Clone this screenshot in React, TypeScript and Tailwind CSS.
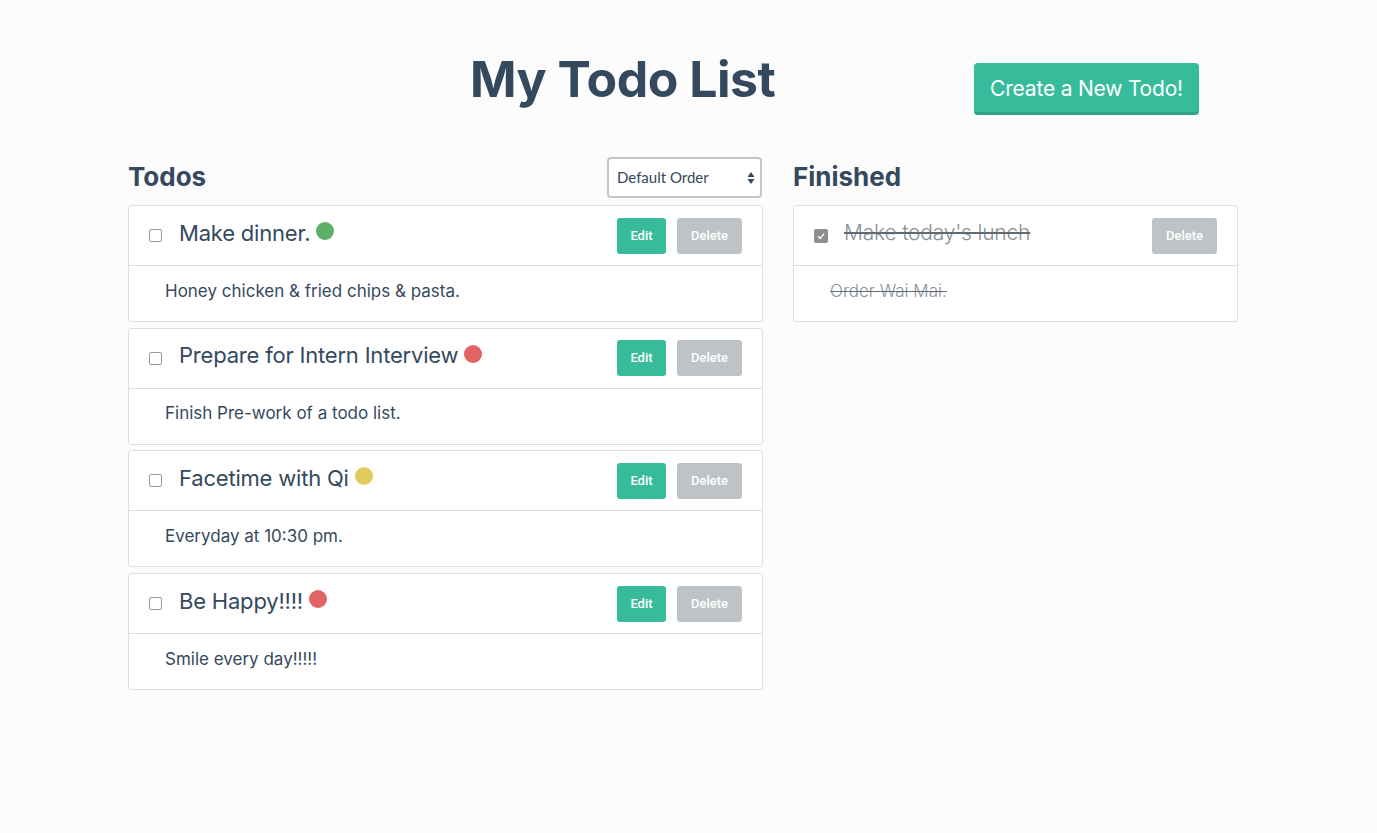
import React from "react";

type Todo = { title: string; desc: string; color: string };

const todos: Todo[] = [
  { title: "Make dinner.", desc: "Honey chicken & fried chips & pasta.", color: "bg-[#5cae68]" },
  { title: "Prepare for Intern Interview", desc: "Finish Pre-work of a todo list.", color: "bg-[#e06464]" },
  { title: "Facetime with Qi", desc: "Everyday at 10:30 pm.", color: "bg-[#dfcc5c]" },
  { title: "Be Happy!!!!", desc: "Smile every day!!!!!", color: "bg-[#e06464]" },
];

function TodoCard({ t }: { t: Todo }) {
  return (
    <div className="border border-[#dcdfe2] rounded-[3px] bg-white">
      <div className="h-[60px] flex items-center pl-[20px] pr-[20px] border-b border-[#dcdfe2]">
        <span className="w-[13px] h-[13px] rounded-[2px] border border-[#9a9a9a] bg-white shrink-0" />
        <span className="ml-[17px] text-[22px] leading-none text-[#34495e] -mt-[6px] font-['Inter',sans-serif] tracking-[-0.2px]">
          {t.title}
        </span>
        <span className={`ml-[6px] -mt-[9px] w-[18px] h-[18px] rounded-full ${t.color} shrink-0`} />
        <div className="ml-auto flex gap-[11px]">
          <button className="w-[49px] h-[36px] rounded-[3px] bg-[#37bc9b] text-white text-[13px] font-medium font-['Roboto',sans-serif]">
            Edit
          </button>
          <button className="w-[65px] h-[36px] rounded-[3px] bg-[#bdc3c7] text-white text-[13px] font-medium font-['Roboto',sans-serif]">
            Delete
          </button>
        </div>
      </div>
      <div className="h-[55px] flex items-center pl-[36px] text-[17px] text-[#34495e] font-['Inter',sans-serif]">
        <span className="-mt-[4px]">{t.desc}</span>
      </div>
    </div>
  );
}

export default function App() {
  return (
    <div className="min-h-[833px] bg-[#fcfcfc] text-[#34495e] font-['Inter',sans-serif]">
      <div className="ml-[128px] w-[1110px]">
        <header className="flex items-start pt-[50px]">
          <h1 className="ml-[342px] text-[50px] leading-[58px] font-bold text-[#34495e] tracking-[-0.5px]">
            My Todo List
          </h1>
          <button className="ml-auto mr-[39px] mt-[13px] w-[225px] h-[52px] pt-[3px] rounded-[4px] bg-[#37bc9b] border-b-[3px] border-[#2fa383] text-white text-[21px] font-['Inter',sans-serif] tracking-[-0.2px]">
            Create a New Todo!
          </button>
        </header>

        <div className="mt-[42px] flex gap-[30px] items-start">
          <section className="w-[635px]">
            <div className="flex items-center justify-between h-[41px]">
              <h2 className="text-[26px] font-bold leading-none -mt-[2px]">Todos</h2>
              <div className="relative w-[155px] h-[41px] mr-[1px] border-2 border-[#c3c6c9] rounded-[4px] bg-white flex items-center pl-[8px]">
                <span className="text-[15px] text-[#34495e] font-['Lato',sans-serif]">Default Order</span>
                <svg className="absolute right-[5px] top-[12px]" width="8" height="14" viewBox="0 0 8 14">
                  <path d="M4 1 L7.5 6 L0.5 6 Z" fill="#34495e" />
                  <path d="M4 13 L7.5 8 L0.5 8 Z" fill="#34495e" />
                </svg>
              </div>
            </div>
            <div className="mt-[7px] flex flex-col gap-[5.7px]">
              {todos.map((t) => (
                <TodoCard key={t.title} t={t} />
              ))}
            </div>
          </section>

          <section className="w-[445px]">
            <div className="flex items-center h-[41px]">
              <h2 className="text-[26px] font-bold leading-none -mt-[2px]">Finished</h2>
            </div>
            <div className="mt-[7px] border border-[#dcdfe2] rounded-[3px] bg-white">
              <div className="h-[60px] flex items-center pl-[20px] pr-[20px] border-b border-[#dcdfe2]">
                <span className="w-[14px] h-[14px] rounded-[2px] bg-[#8e8e8e] shrink-0 flex items-center justify-center">
                  <svg width="10" height="10" viewBox="0 0 10 10">
                    <path d="M2 5.2 L4.2 7.4 L8.2 2.6" stroke="white" strokeWidth="1.4" fill="none" />
                  </svg>
                </span>
                <span className="ml-[16px] text-[21px] leading-none text-[#8b9196] font-light line-through decoration-[#5f6a73] -mt-[6px] font-['Inter',sans-serif] tracking-[-0.2px]">
                  Make today's lunch
                </span>
                <button className="ml-auto w-[65px] h-[36px] rounded-[3px] bg-[#bdc3c7] text-white text-[13px] font-medium font-['Roboto',sans-serif]">
                  Delete
                </button>
              </div>
              <div className="h-[55px] flex items-center pl-[36px] text-[17px] text-[#8b9196] font-light line-through decoration-[#5f6a73]">
                <span className="-mt-[4px]">Order Wai Mai.</span>
              </div>
            </div>
          </section>
        </div>
      </div>
    </div>
  );
}
